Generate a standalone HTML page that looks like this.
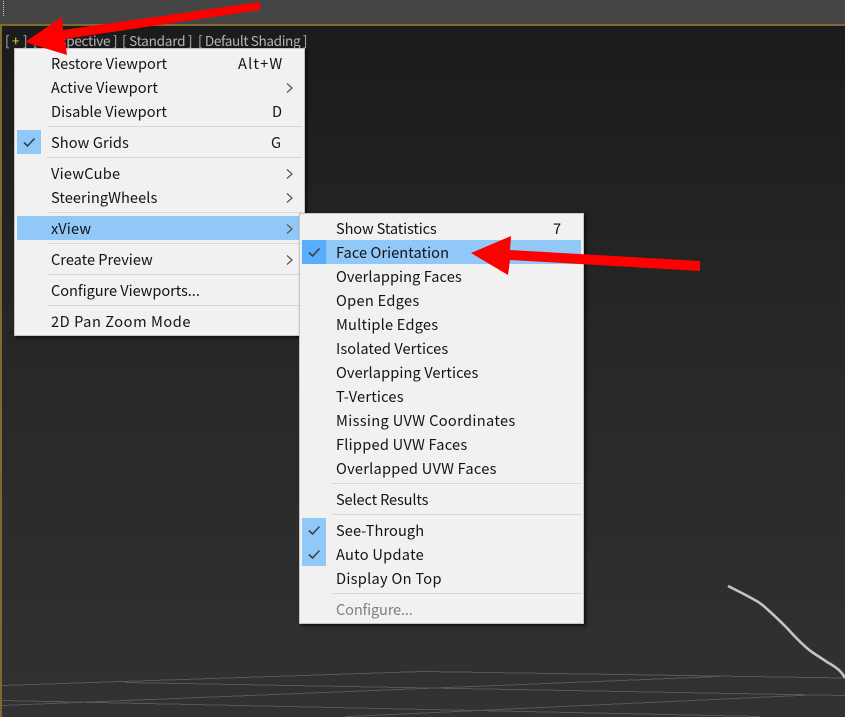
<!DOCTYPE html>
<html>
<head>
<meta charset="utf-8">
<style>
html,body{margin:0;padding:0;background:#2a2a2a}
#r{position:relative;width:845px;height:717px;overflow:hidden;background:linear-gradient(180deg,#1b1b1b 25px,#222 200px,#2a2a2a 450px,#323232 717px);font-family:"Noto Sans CJK KR","Liberation Sans",sans-serif}
.abs{position:absolute}
.top{left:0;top:0;width:845px;height:24px;background:#454545}
.gold{left:0;top:24px;width:845px;height:2px;background:#7d6a2f}
.goldl{left:0;top:24px;width:2px;height:693px;background:#7d6a2f}
.grip{left:3px;top:1px;width:1px;height:16px;background:repeating-linear-gradient(180deg,#bbb 0 1px,#555 1px 2px)}
.menu{position:absolute;background:#f1f1f1;border:1px solid #c4c4c4;box-sizing:border-box;box-shadow:2px 2px 3px rgba(0,0,0,.6)}
.t{position:absolute;height:24px;line-height:24px;font-size:14.6px;color:#141414;white-space:nowrap}
.s{position:absolute;height:1px;background:#d6d6d6}
.h{position:absolute;background:#90c8f8}
.lbl{position:absolute;top:31px;height:18px;line-height:18px;font-size:13.6px;color:#b4b4b4;white-space:nowrap}
svg{position:absolute;left:0;top:0}
</style>
</head>
<body>
<div id="r">
<div class="abs top"></div>
<div class="abs grip"></div>
<div class="abs gold"></div>
<div class="abs goldl"></div>

<svg width="845" height="717" viewBox="0 0 845 717">
<g stroke="#575757" stroke-width="1" fill="none" shape-rendering="crispEdges">
<path d="M2 685.5L423 671.5L845 678"/>
<path d="M125 682.5L845 695.5"/>
<path d="M2 705.5L720 676.5"/>
<path d="M2 700.5L760 716.5"/>
<path d="M345 716.7L810 695"/>
</g>
<path d="M728 586C738 591 746 595 753 599C759 602 763 605 767 609C775 616 781 622 787 628C795 637 801 643 808 649C814 654 820 657 827 662C834 666 841 670 845 678" fill="none" stroke="#c4c4c4" stroke-width="2.6"/>
</svg>

<div class="lbl" style="left:5px">[</div>
<div class="lbl" style="left:12px;color:#e8cf3a">+</div>
<div class="lbl" style="left:23px">]</div>
<div class="lbl" style="left:33px;letter-spacing:-.3px">[ Perspective ]</div>
<div class="lbl" style="left:122px;letter-spacing:-.25px">[ Standard ]</div>
<div class="lbl" style="left:198px;letter-spacing:-.38px">[ Default Shading ]</div>

<!-- main menu -->
<div class="menu" style="left:14px;top:48px;width:291px;height:288px"></div>
<div class="s" style="left:47px;top:126px;width:255px"></div>
<div class="s" style="left:47px;top:157px;width:255px"></div>
<div class="s" style="left:47px;top:212px;width:255px"></div>
<div class="s" style="left:47px;top:243px;width:255px"></div>
<div class="s" style="left:47px;top:274px;width:255px"></div>
<div class="s" style="left:47px;top:305px;width:255px"></div>
<div class="h" style="left:17px;top:130px;width:24px;height:24px"></div>
<div class="h" style="left:17px;top:216px;width:284px;height:24px"></div>
<div class="t" style="left:51px;top:52px">Restore Viewport</div>
<div class="t" style="left:238px;top:52px;letter-spacing:1.2px">Alt+W</div>
<div class="t" style="left:51px;top:76px;letter-spacing:.07px">Active Viewport</div>
<div class="t" style="left:51px;top:100px;letter-spacing:.06px">Disable Viewport</div>
<div class="t" style="left:272px;top:100px">D</div>
<div class="t" style="left:51px;top:131px;letter-spacing:.1px">Show Grids</div>
<div class="t" style="left:271px;top:131px">G</div>
<div class="t" style="left:51px;top:162px;letter-spacing:.25px">ViewCube</div>
<div class="t" style="left:51px;top:186px;letter-spacing:.07px">SteeringWheels</div>
<div class="t" style="left:51px;top:217px;letter-spacing:.2px">xView</div>
<div class="t" style="left:51px;top:248px">Create Preview</div>
<div class="t" style="left:51px;top:279px;letter-spacing:-.05px">Configure Viewports...</div>
<div class="t" style="left:51px;top:310px;letter-spacing:.56px">2D Pan Zoom Mode</div>

<!-- submenu -->
<div class="menu" style="left:299px;top:213px;width:285px;height:411px"></div>
<div class="s" style="left:332px;top:483px;width:249px"></div>
<div class="s" style="left:332px;top:514px;width:249px"></div>
<div class="s" style="left:332px;top:593px;width:249px"></div>
<div class="h" style="left:302px;top:240px;width:279px;height:24px"></div>
<div class="h" style="left:302px;top:240px;width:24px;height:24px;background:#58aefc"></div>
<div class="h" style="left:302px;top:518px;width:24px;height:48px"></div>
<div class="t" style="left:336px;top:217px;letter-spacing:-.13px">Show Statistics</div>
<div class="t" style="left:553px;top:217px">7</div>
<div class="t" style="left:336px;top:241px;letter-spacing:.06px">Face Orientation</div>
<div class="t" style="left:336px;top:265px;letter-spacing:.06px">Overlapping Faces</div>
<div class="t" style="left:336px;top:289px;letter-spacing:.3px">Open Edges</div>
<div class="t" style="left:336px;top:313px;letter-spacing:.21px">Multiple Edges</div>
<div class="t" style="left:336px;top:337px;letter-spacing:.06px">Isolated Vertices</div>
<div class="t" style="left:336px;top:361px;letter-spacing:.1px">Overlapping Vertices</div>
<div class="t" style="left:336px;top:385px;letter-spacing:.2px">T-Vertices</div>
<div class="t" style="left:336px;top:409px;letter-spacing:.35px">Missing UVW Coordinates</div>
<div class="t" style="left:336px;top:433px;letter-spacing:.24px">Flipped UVW Faces</div>
<div class="t" style="left:336px;top:457px;letter-spacing:.25px">Overlapped UVW Faces</div>
<div class="t" style="left:336px;top:488px;letter-spacing:-.14px">Select Results</div>
<div class="t" style="left:336px;top:519px;letter-spacing:.09px">See-Through</div>
<div class="t" style="left:336px;top:543px;letter-spacing:.27px">Auto Update</div>
<div class="t" style="left:336px;top:567px;letter-spacing:.29px">Display On Top</div>
<div class="t" style="left:336px;top:598px;color:#808080;letter-spacing:-.17px">Configure...</div>

<svg width="845" height="717" viewBox="0 0 845 717">
<g fill="none" stroke="#555" stroke-width="1.2">
<path d="M287 83.5L292 88L287 92.5"/>
<path d="M287 169.5L292 174L287 178.5"/>
<path d="M287 193.5L292 198L287 202.5"/>
<path d="M287 224.5L292 229L287 233.5"/>
<path d="M287 255.5L292 260L287 264.5"/>
</g>
<g fill="none" stroke="#3f3f3f" stroke-width="1.6">
<path d="M24 142.5L27.5 146L34.5 138.5"/>
<path d="M309 252.5L312.5 256L319.5 248.5"/>
<path d="M309 530.5L312.5 534L319.5 526.5"/>
<path d="M309 554.5L312.5 558L319.5 550.5"/>
</g>
<polygon fill="#fe0000" points="260,2 260,10 65,39 67,55 25,42 62,17 63,30"/>
<polygon fill="#fe0000" points="471,253 511,236 510,250 700,261 700,271 510,260 508,275"/>
</svg>
</div>
</body>
</html>
